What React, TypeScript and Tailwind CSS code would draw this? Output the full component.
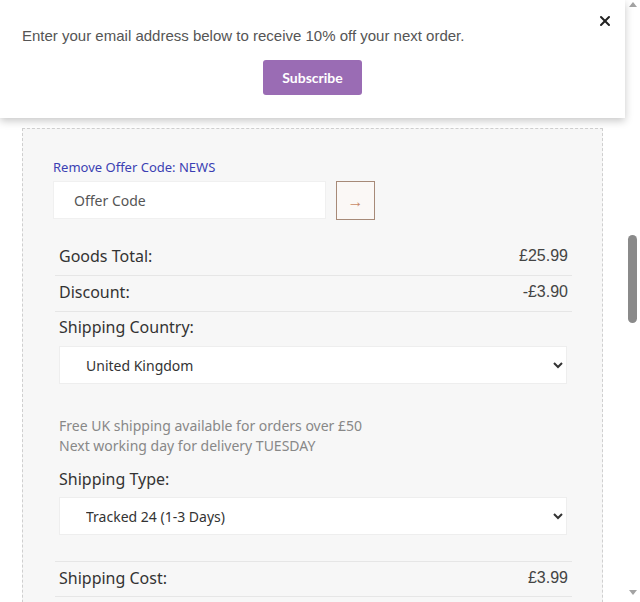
import { X } from 'lucide-react';

const sans = "font-['Noto_Sans',sans-serif]";
const arial = "font-['Liberation_Sans',Arial,sans-serif]";

function Row({ label, value, top }: { label: string; value: string; top?: boolean }) {
  return (
    <div
      className={`flex h-[36px] items-center justify-between border-b border-[#e6e6e6] px-[4px] pb-[3px] ${
        top ? 'border-t' : ''
      }`}
    >
      <span className={`${sans} text-[16px] text-[#333]`}>{label}</span>
      <span className={`${arial} text-[16px] text-[#444]`}>{value}</span>
    </div>
  );
}

function Dropdown({ value }: { value: string }) {
  return (
    <div className="pl-[4px] pr-[5px]">
      <select
        defaultValue={value}
        className={`${sans} h-[38px] w-full border border-[#eeeeee] bg-white pl-[22px] pr-[6px] text-[14px] text-[#333]`}
      >
        <option>{value}</option>
      </select>
    </div>
  );
}

function Scrollbar() {
  return (
    <div className="flex w-[15px] shrink-0 flex-col items-center bg-white">
      <div className="mt-[2px] h-0 w-0 border-x-[4px] border-b-[5px] border-x-transparent border-b-[#a3a3a3]" />
      <div className="mt-[228px] h-[88px] w-[9px] rounded-full bg-[#8a8a8a]" />
      <div className="mt-auto mb-[7px] h-0 w-0 border-x-[4px] border-t-[5px] border-x-transparent border-t-[#a3a3a3]" />
    </div>
  );
}

export default function App() {
  return (
    <div className="flex h-[602px] w-[640px] overflow-hidden bg-white">
      <div className="flex w-[625px] shrink-0 flex-col">
        <header className="relative z-10 flex h-[118px] shrink-0 flex-col bg-white shadow-[0_3px_8px_rgba(0,0,0,0.22)]">
          <div className="flex items-start justify-between pl-[22px] pr-[12px] pt-[13px]">
            <p className={`${arial} mt-[12px] text-[15px] text-[#555]`}>
              Enter your email address below to receive 10% off your next order.
            </p>
            <X size={16} strokeWidth={3} className="text-[#222]" />
          </div>
          <div className="mt-[12px] flex justify-center">
            <button className="flex h-[35px] w-[99px] items-center justify-center rounded-[3px] bg-[#9a6cb4] font-['Lato',sans-serif] text-[14px] font-bold text-white">
              Subscribe
            </button>
          </div>
        </header>

        <section className="mx-auto mt-[10px] w-[581px] shrink-0 border border-dashed border-[#cfcfcf] bg-[#f7f7f7] px-[30px] pb-[40px] pt-[29px]">
          <a className={`${sans} block text-[13px] leading-[18px] text-[#3b3fb3]`}>
            Remove Offer Code: NEWS
          </a>
          <div className="mt-[5px] flex gap-[10px]">
            <input
              placeholder="Offer Code"
              className={`${sans} h-[38px] w-[273px] border border-[#f0f0f0] bg-white px-[20px] text-[14px] placeholder:text-[#555]`}
            />
            <button className="flex h-[39px] w-[39px] items-center justify-center border border-[#a78a78] bg-[#fbf8f6] text-[16px] text-[#c98a66]">
              →
            </button>
          </div>

          <div className="ml-[2px] mt-[20px]">
            <Row label="Goods Total:" value="£25.99" />
            <Row label="Discount:" value="-£3.90" />
            <div className={`${sans} px-[4px] pb-[7px] pt-[3px] text-[16px] leading-[24px] text-[#333]`}>
              Shipping Country:
            </div>
            <Dropdown value="United Kingdom" />
            <div className={`${sans} mt-[32px] px-[4px] text-[14px] leading-[20px] text-[#888]`}>
              <p>Free UK shipping available for orders over £50</p>
              <p>Next working day for delivery TUESDAY</p>
            </div>
            <div className={`${sans} mt-[11px] px-[4px] pb-[6px] text-[16px] leading-[24px] text-[#333]`}>
              Shipping Type:
            </div>
            <Dropdown value="Tracked 24 (1-3 Days)" />
            <div className="mt-[26px]">
              <Row label="Shipping Cost:" value="£3.99" top />
            </div>
            <div className="h-[40px]" />
          </div>
        </section>
      </div>
      <Scrollbar />
    </div>
  );
}
